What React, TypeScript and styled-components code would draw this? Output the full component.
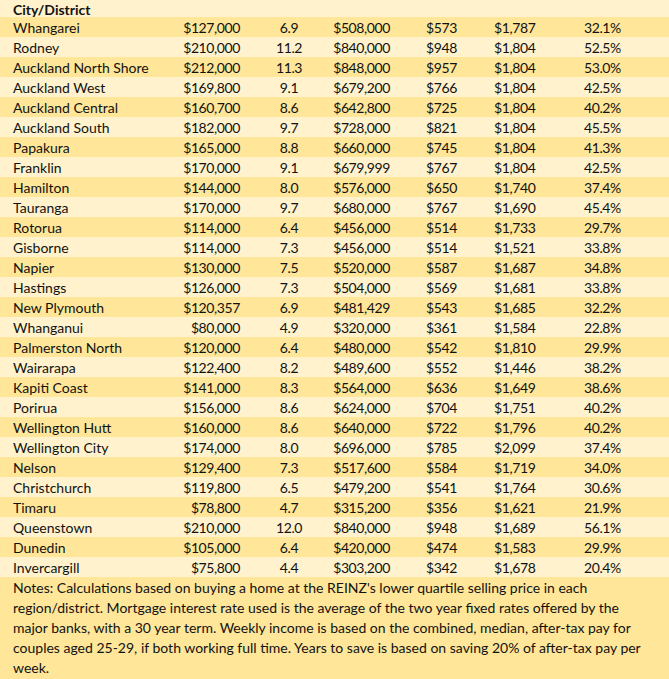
import React from "react";
import styled, { createGlobalStyle } from "styled-components";

const GlobalStyle = createGlobalStyle`
  html, body { margin: 0; padding: 0; background: #FFF2CC; }
  body { font-family: Lato, "Liberation Sans", sans-serif; }
`;

const Sheet = styled.div`
  width: 669px;
  height: 679px;
  overflow: hidden;
  background: #FFF2CC;
  color: #121212;
  font-family: Lato, "Liberation Sans", sans-serif;
  font-size: 14px;
`;

const Row = styled.div<{ $dark?: boolean; $h?: number }>`
  display: grid;
  grid-template-columns: 147px 80px 98px 52px 104px 90px 1fr;
  align-items: center;
  height: ${(p) => p.$h ?? 20}px;
  padding-left: 13px;
  padding-top: 1px;
  box-sizing: border-box;
  background: ${(p) => (p.$dark ? "#FFE699" : "#FFF2CC")};
  white-space: nowrap;
`;

const HeaderCell = styled.div`
  font-weight: 700;
`;

const Cell = styled.div<{ $align: "left" | "right" | "center"; $pad?: number; $num?: boolean }>`
  display: flex;
  justify-content: ${(p) =>
    p.$align === "right" ? "flex-end" : p.$align === "center" ? "center" : "flex-start"};
  padding-left: ${(p) => p.$pad ?? 0}px;
  letter-spacing: ${(p) => (p.$num ? "-0.4px" : "0")};
`;

const Notes = styled.div`
  background: #FFE699;
  padding: 1px 0 0 13px;
  line-height: 20px;
  height: 102px;
  box-sizing: border-box;
`;

const NoteLine = styled.div`
  white-space: nowrap;
`;

type R = [string, string, string, string, string, string, string];

const rows: R[] = [
  ["Whangarei", "$127,000", "6.9", "$508,000", "$573", "$1,787", "32.1%"],
  ["Rodney", "$210,000", "11.2", "$840,000", "$948", "$1,804", "52.5%"],
  ["Auckland North Shore", "$212,000", "11.3", "$848,000", "$957", "$1,804", "53.0%"],
  ["Auckland West", "$169,800", "9.1", "$679,200", "$766", "$1,804", "42.5%"],
  ["Auckland Central", "$160,700", "8.6", "$642,800", "$725", "$1,804", "40.2%"],
  ["Auckland South", "$182,000", "9.7", "$728,000", "$821", "$1,804", "45.5%"],
  ["Papakura", "$165,000", "8.8", "$660,000", "$745", "$1,804", "41.3%"],
  ["Franklin", "$170,000", "9.1", "$679,999", "$767", "$1,804", "42.5%"],
  ["Hamilton", "$144,000", "8.0", "$576,000", "$650", "$1,740", "37.4%"],
  ["Tauranga", "$170,000", "9.7", "$680,000", "$767", "$1,690", "45.4%"],
  ["Rotorua", "$114,000", "6.4", "$456,000", "$514", "$1,733", "29.7%"],
  ["Gisborne", "$114,000", "7.3", "$456,000", "$514", "$1,521", "33.8%"],
  ["Napier", "$130,000", "7.5", "$520,000", "$587", "$1,687", "34.8%"],
  ["Hastings", "$126,000", "7.3", "$504,000", "$569", "$1,681", "33.8%"],
  ["New Plymouth", "$120,357", "6.9", "$481,429", "$543", "$1,685", "32.2%"],
  ["Whanganui", "$80,000", "4.9", "$320,000", "$361", "$1,584", "22.8%"],
  ["Palmerston North", "$120,000", "6.4", "$480,000", "$542", "$1,810", "29.9%"],
  ["Wairarapa", "$122,400", "8.2", "$489,600", "$552", "$1,446", "38.2%"],
  ["Kapiti Coast", "$141,000", "8.3", "$564,000", "$636", "$1,649", "38.6%"],
  ["Porirua", "$156,000", "8.6", "$624,000", "$704", "$1,751", "40.2%"],
  ["Wellington Hutt", "$160,000", "8.6", "$640,000", "$722", "$1,796", "40.2%"],
  ["Wellington City", "$174,000", "8.0", "$696,000", "$785", "$2,099", "37.4%"],
  ["Nelson", "$129,400", "7.3", "$517,600", "$584", "$1,719", "34.0%"],
  ["Christchurch", "$119,800", "6.5", "$479,200", "$541", "$1,764", "30.6%"],
  ["Timaru", "$78,800", "4.7", "$315,200", "$356", "$1,621", "21.9%"],
  ["Queenstown", "$210,000", "12.0", "$840,000", "$948", "$1,689", "56.1%"],
  ["Dunedin", "$105,000", "6.4", "$420,000", "$474", "$1,583", "29.9%"],
  ["Invercargill", "$75,800", "4.4", "$303,200", "$342", "$1,678", "20.4%"],
];

const notes = [
  "Notes: Calculations based on buying a home at the REINZ's lower quartile selling price in each",
  "region/district. Mortgage interest rate used is the average of the two year fixed rates offered by the",
  "major banks, with a 30 year term. Weekly income is based on the combined, median, after-tax pay for",
  "couples aged 25-29, if both working full time. Years to save is based on saving 20% of after-tax pay per",
  "week.",
];

export default function App() {
  return (
    <>
      <GlobalStyle />
      <Sheet>
        <Row $h={17}>
          <HeaderCell>City/District</HeaderCell>
        </Row>
        {rows.map((r, i) => (
          <Row key={r[0]} $dark={i % 2 === 0}>
            <Cell $align="left">{r[0]}</Cell>
            <Cell $align="right" $num>{r[1]}</Cell>
            <Cell $align="center" $num>{r[2]}</Cell>
            <Cell $align="right" $num>{r[3]}</Cell>
            <Cell $align="left" $pad={36} $num>{r[4]}</Cell>
            <Cell $align="left" $num>{r[5]}</Cell>
            <Cell $align="left" $num>{r[6]}</Cell>
          </Row>
        ))}
        <Notes>
          {notes.map((n) => (
            <NoteLine key={n}>{n}</NoteLine>
          ))}
        </Notes>
      </Sheet>
    </>
  );
}
